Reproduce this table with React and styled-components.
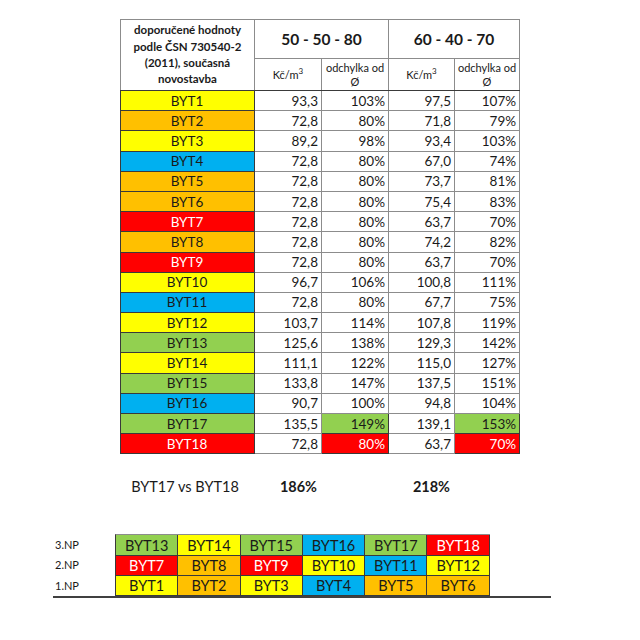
import React from "react";
import styled, { createGlobalStyle } from "styled-components";

const COLORS = {
  y: "#ffff00",
  o: "#ffc000",
  b: "#00b0f0",
  r: "#ff0000",
  g: "#92d050",
};

const rows = [
  ["BYT1", "y", "93,3", "103%", "97,5", "107%"],
  ["BYT2", "o", "72,8", "80%", "71,8", "79%"],
  ["BYT3", "y", "89,2", "98%", "93,4", "103%"],
  ["BYT4", "b", "72,8", "80%", "67,0", "74%"],
  ["BYT5", "o", "72,8", "80%", "73,7", "81%"],
  ["BYT6", "o", "72,8", "80%", "75,4", "83%"],
  ["BYT7", "r", "72,8", "80%", "63,7", "70%"],
  ["BYT8", "o", "72,8", "80%", "74,2", "82%"],
  ["BYT9", "r", "72,8", "80%", "63,7", "70%"],
  ["BYT10", "y", "96,7", "106%", "100,8", "111%"],
  ["BYT11", "b", "72,8", "80%", "67,7", "75%"],
  ["BYT12", "y", "103,7", "114%", "107,8", "119%"],
  ["BYT13", "g", "125,6", "138%", "129,3", "142%"],
  ["BYT14", "y", "111,1", "122%", "115,0", "127%"],
  ["BYT15", "g", "133,8", "147%", "137,5", "151%"],
  ["BYT16", "b", "90,7", "100%", "94,8", "104%"],
  ["BYT17", "g", "135,5", "149%", "139,1", "153%", true],
  ["BYT18", "r", "72,8", "80%", "63,7", "70%", true],
];

const floors = [
  ["3.NP", [["BYT13", "g"], ["BYT14", "y"], ["BYT15", "g"], ["BYT16", "b"], ["BYT17", "g"], ["BYT18", "r"]]],
  ["2.NP", [["BYT7", "r"], ["BYT8", "o"], ["BYT9", "r"], ["BYT10", "y"], ["BYT11", "b"], ["BYT12", "y"]]],
  ["1.NP", [["BYT1", "y"], ["BYT2", "o"], ["BYT3", "y"], ["BYT4", "b"], ["BYT5", "o"], ["BYT6", "o"]]],
];

const GlobalStyle = createGlobalStyle`
  body {
    margin: 0;
    background: #fff;
    font-family: Lato, "Liberation Sans", sans-serif;
    color: #1a1a1a;
  }
`;

const Page = styled.div`
  width: 640px;
  height: 640px;
  padding-top: 19px;
  box-sizing: border-box;
`;

const Table = styled.table`
  margin-left: 120px;
  border-collapse: collapse;
  table-layout: fixed;
  width: 399px;
  font-size: 13.5px;
  border: 1px solid #7f7f7f;
`;

const Th = styled.th`
  border: 1px solid #8c8c8c;
  font-weight: ${(p) => (p.$light ? 400 : 700)};
  font-size: ${(p) => p.$size || 11.5}px;
  line-height: ${(p) => p.$lh || 14}px;
  padding: 0;
  text-align: center;
  vertical-align: middle;
  height: ${(p) => p.$h}px;
  border-bottom-color: ${(p) => (p.$dark ? "#3a3a3a" : "#8c8c8c")};
`;

const Sup = styled.sup`
  font-size: 8px;
  line-height: 0;
`;

const Tr = styled.tr`
  height: 20.2px;
`;

const Td = styled.td`
  border: 1px solid ${(p) => (p.$c ? "#3a3a3a" : "#8c8c8c")};
  background: ${(p) => (p.$c ? COLORS[p.$c] : "#fff")};
  color: ${(p) => (p.$c === "r" ? "#fff" : "#1a1a1a")};
  text-align: ${(p) => (p.$center ? "center" : "right")};
  padding: 0 3px 0 2px;
  line-height: 18px;
  white-space: nowrap;
`;

const Summary = styled.div`
  margin: 23px 0 0 120px;
  display: grid;
  grid-template-columns: 134px 67px 67px 66px 65px;
  font-size: 14.5px;
  line-height: 20px;
`;

const SumCell = styled.div`
  text-align: ${(p) => (p.$center ? "center" : "right")};
  font-weight: ${(p) => (p.$bold ? 700 : 400)};
  padding-right: 4px;
`;

const Floors = styled.div`
  margin: 37px 0 0 53px;
  width: 498px;
  display: flex;
  border-bottom: 2px solid #404040;
`;

const Labels = styled.div`
  width: 62px;
  display: grid;
  grid-template-rows: repeat(3, 20.3px);
  font-size: 11px;
  align-items: center;
  padding-left: 2px;
  box-sizing: border-box;
`;

const Grid = styled.div`
  display: grid;
  grid-template-columns: repeat(6, 62.3px);
  grid-template-rows: repeat(3, 20.3px);
  border-top: 1px solid #8c8c8c;
  border-left: 1px solid #3a3a3a;
`;

const Flat = styled.div`
  background: ${(p) => COLORS[p.$c]};
  color: ${(p) => (p.$c === "r" ? "#fff" : "#1a1a1a")};
  border-right: 1px solid #3a3a3a;
  border-bottom: 1px solid #3a3a3a;
  display: flex;
  align-items: center;
  justify-content: center;
  font-size: 14.5px;
`;

export default function App() {
  return (
    <Page>
      <GlobalStyle />
      <Table>
        <colgroup>
          <col style={{ width: 134 }} />
          <col style={{ width: 67 }} />
          <col style={{ width: 67 }} />
          <col style={{ width: 66 }} />
          <col style={{ width: 65 }} />
        </colgroup>
        <thead>
          <tr>
            <Th rowSpan={2} $lh={16.4} $dark>
              doporučené hodnoty podle ČSN 730540-2 (2011), současná novostavba
            </Th>
            <Th colSpan={2} $size={15.5} $h={38}>
              50 - 50 - 80
            </Th>
            <Th colSpan={2} $size={15.5} $h={38}>
              60 - 40 - 70
            </Th>
          </tr>
          <tr>
            <Th $light $dark $size={11} $h={31}>
              Kč/m<Sup>3</Sup>
            </Th>
            <Th $light $dark $size={11}>
              odchylka od Ø
            </Th>
            <Th $light $dark $size={11}>
              Kč/m<Sup>3</Sup>
            </Th>
            <Th $light $dark $size={11}>
              odchylka od Ø
            </Th>
          </tr>
        </thead>
        <tbody>
          {rows.map(([name, c, a, ap, b, bp, hl]) => (
            <Tr key={name}>
              <Td $c={c} $center>
                {name}
              </Td>
              <Td>{a}</Td>
              <Td $c={hl ? c : undefined}>{ap}</Td>
              <Td>{b}</Td>
              <Td $c={hl ? c : undefined}>{bp}</Td>
            </Tr>
          ))}
        </tbody>
      </Table>
      <Summary>
        <SumCell $center>BYT17 vs BYT18</SumCell>
        <SumCell $bold>186%</SumCell>
        <SumCell />
        <SumCell $bold>218%</SumCell>
      </Summary>
      <Floors>
        <Labels>
          {floors.map(([label]) => (
            <span key={label}>{label}</span>
          ))}
        </Labels>
        <Grid>
          {floors.map(([label, flats]) =>
            flats.map(([name, c]) => (
              <Flat key={name} $c={c}>
                {name}
              </Flat>
            ))
          )}
        </Grid>
      </Floors>
    </Page>
  );
}
